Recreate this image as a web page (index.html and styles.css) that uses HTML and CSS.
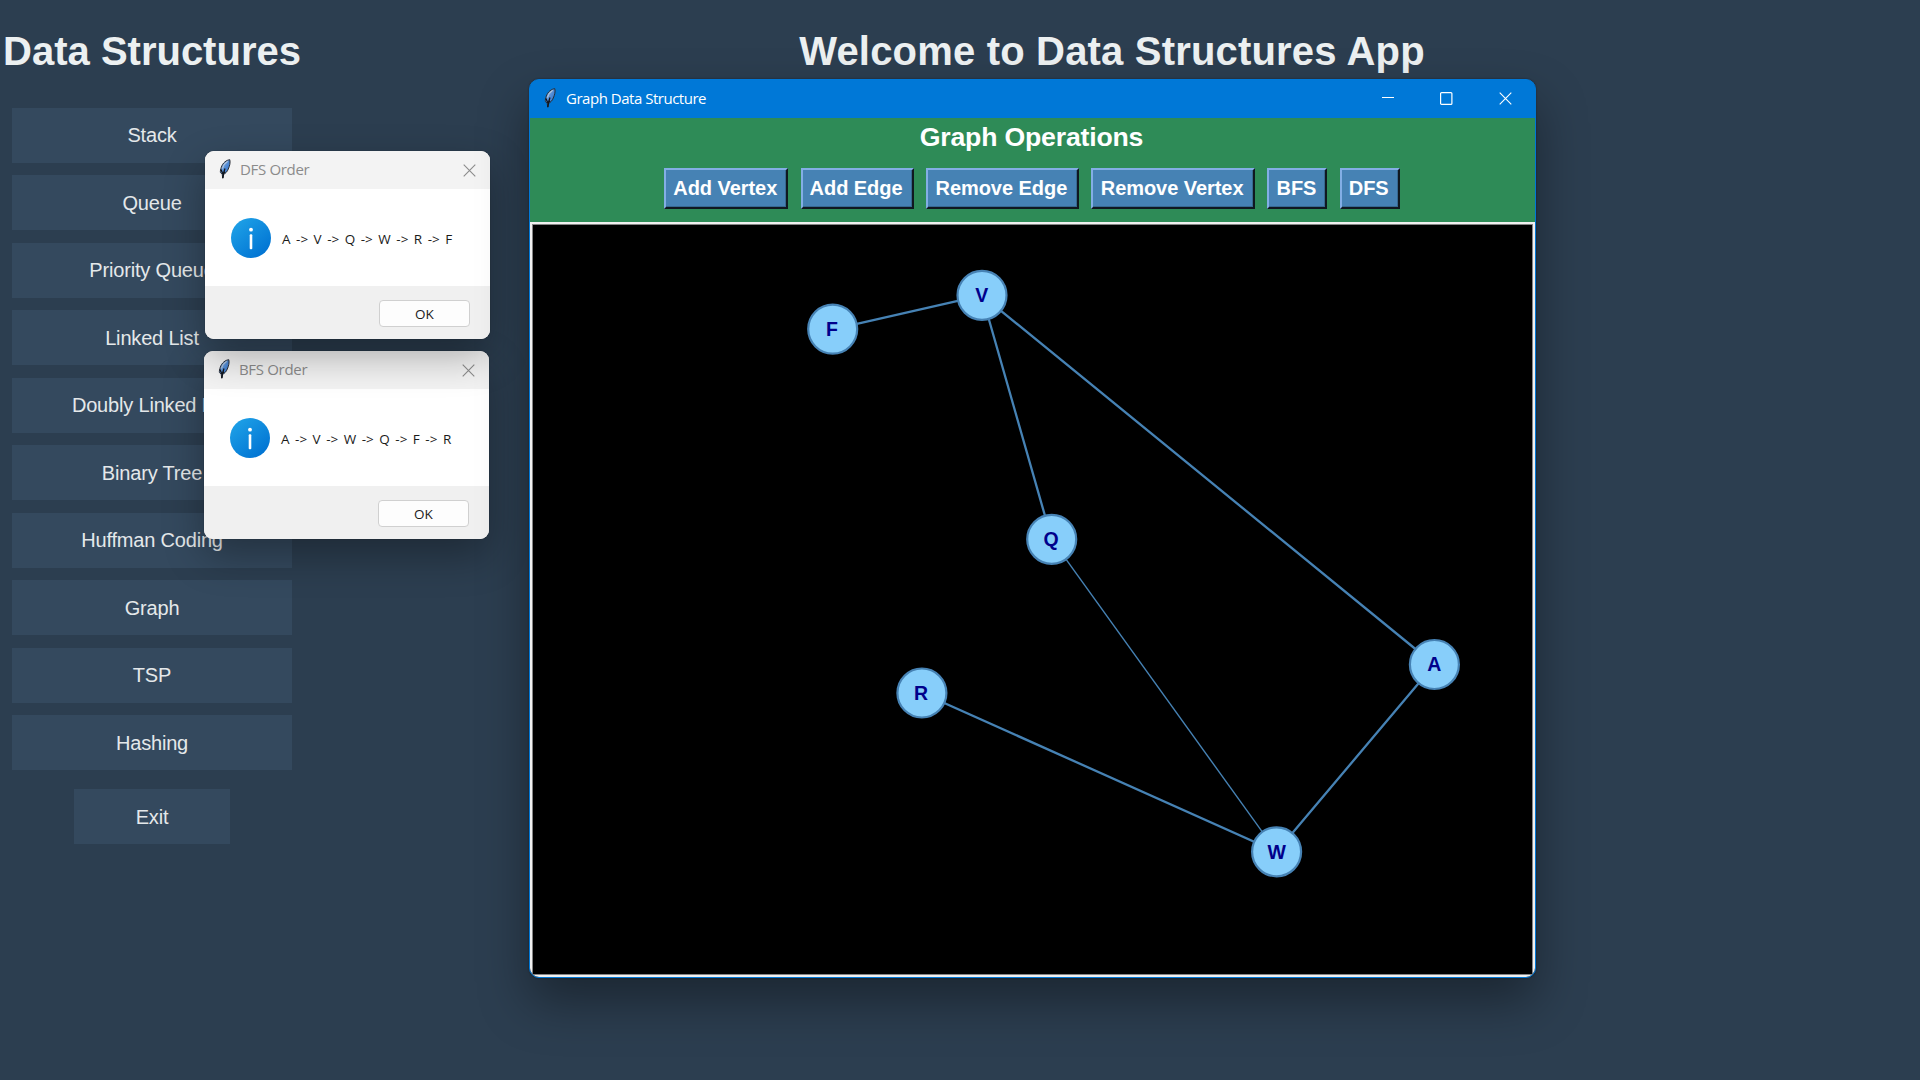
FILE: index.html
```html
<!DOCTYPE html>
<html lang="en">
<head>
<meta charset="utf-8">
<title>Data Structures App</title>
<link rel="stylesheet" href="styles.css">
</head>
<body>
<svg class="defs" aria-hidden="true">
  <defs>
    <linearGradient id="info-fill" x1="0.15" y1="0.1" x2="0.85" y2="0.95">
      <stop offset="0" stop-color="#1d9fe6"/><stop offset="1" stop-color="#0072d2"/>
    </linearGradient>
    <linearGradient id="quill-fill" x1="0" y1="0" x2="1" y2="1">
      <stop offset="0" stop-color="#8db8e8"/><stop offset="0.55" stop-color="#4a86d4"/><stop offset="1" stop-color="#2a5596"/>
    </linearGradient>
    <symbol id="quill" viewBox="0 0 12 20">
      <path d="M10.800.7C7.600.9 3.600 4 2.300 8.200c-.6 2-1.200 3.900-.8 5.400l1.700 1.700.6 4 .9-4c2-1 3.600-2.800 4.600-5.300C10.700 7 11.500 3.600 10.800.7z" fill="url(#quill-fill)" stroke="#2a2e36" stroke-width="1"/>
      <path d="M6 9.500C5 12 4.200 14.500 3.800 19M1.900 10.500l1.800 4 2.500-1.500" fill="none" stroke="#11151c" stroke-width="1.300"/>
      <path d="M8.700 2.300C6.500 3.700 4.400 6.300 3.400 9.500" fill="none" stroke="#b7c6d8" stroke-width="1.100"/>
    </symbol>
    <symbol id="close" viewBox="0 0 13 13">
      <path d="M.7.7l11.600 11.600M12.300.7L.7 12.300" fill="none" stroke="currentColor" stroke-width="1.100"/>
    </symbol>
    <symbol id="info" viewBox="0 0 40 40">
      <circle cx="20" cy="20" r="20" fill="url(#info-fill)"/>
      <circle cx="20" cy="11.700" r="1.900" fill="#fff"/>
      <rect x="18.700" y="16.300" width="2.600" height="15" rx="1" fill="#fff"/>
    </symbol>
  </defs>
</svg>

<div class="app">
  <nav class="sidebar">
    <h1 class="heading">Data Structures</h1>
    <div class="menu">
      <button class="menu-button">Stack</button>
      <button class="menu-button">Queue</button>
      <button class="menu-button">Priority Queue</button>
      <button class="menu-button">Linked List</button>
      <button class="menu-button">Doubly Linked List</button>
      <button class="menu-button">Binary Tree</button>
      <button class="menu-button">Huffman Coding</button>
      <button class="menu-button">Graph</button>
      <button class="menu-button">TSP</button>
      <button class="menu-button">Hashing</button>
    </div>
    <button class="menu-button exit">Exit</button>
  </nav>
  <main class="content"><h1 class="heading welcome">Welcome to Data Structures App</h1></main>
</div>

<section class="dialog dialog-bfs">
  <header class="dialog-title"><svg class="quill"><use href="#quill"/></svg><span class="dialog-name">BFS Order</span><svg class="close"><use href="#close"/></svg></header>
  <div class="dialog-body"><svg class="info"><use href="#info"/></svg><p class="message">A -&gt; V -&gt; W -&gt; Q -&gt; F -&gt; R</p></div>
  <footer class="dialog-footer"><button class="ok">OK</button></footer>
</section>

<section class="dialog dialog-dfs">
  <header class="dialog-title"><svg class="quill"><use href="#quill"/></svg><span class="dialog-name">DFS Order</span><svg class="close"><use href="#close"/></svg></header>
  <div class="dialog-body"><svg class="info"><use href="#info"/></svg><p class="message">A -&gt; V -&gt; Q -&gt; W -&gt; R -&gt; F</p></div>
  <footer class="dialog-footer"><button class="ok">OK</button></footer>
</section>

<section class="window">
  <header class="window-title">
    <svg class="quill"><use href="#quill"/></svg>
    <span class="window-name">Graph Data Structure</span>
    <div class="controls">
      <svg class="control" viewBox="0 0 13 13"><path d="M1 5.500h12" stroke="#fff" stroke-width="1.100"/></svg>
      <svg class="control" viewBox="0 0 13 13"><rect x=".6" y=".6" width="11.300" height="11.800" rx="1" fill="none" stroke="#fff" stroke-width="1.200"/></svg>
      <svg class="control"><use href="#close"/></svg>
    </div>
  </header>
  <div class="operations">
    <h2 class="operations-title">Graph Operations</h2>
    <div class="toolbar">
      <button class="tool add-vertex">Add Vertex</button>
      <button class="tool add-edge">Add Edge</button>
      <button class="tool remove-edge">Remove Edge</button>
      <button class="tool remove-vertex">Remove Vertex</button>
      <button class="tool short">BFS</button>
      <button class="tool short">DFS</button>
    </div>
  </div>
  <svg class="canvas" viewBox="532 224.700 1001 751">
    <g class="edges">
      <path d="M832.700 330L982 296M982 296L1051.700 540M982 296L1434.400 665.200M921.900 693.700L1276.600 852.500M1434.400 665.200L1276.600 852.500"/>
      <path class="thin" d="M1051.700 540L1276.600 852.500"/>
    </g>
    <g class="nodes">
      <circle cx="832.700" cy="329.800" r="24.500"/><circle cx="982" cy="296" r="24.500"/><circle cx="1051.700" cy="540" r="24.500"/>
      <circle cx="921.900" cy="693.700" r="24.500"/><circle cx="1434.400" cy="665.200" r="24.500"/><circle cx="1276.600" cy="852.500" r="24.500"/>
    </g>
    <g class="labels">
      <text x="832" y="337">F</text><text x="981.700" y="303">V</text><text x="1051.200" y="547">Q</text>
      <text x="921" y="700.700">R</text><text x="1434.200" y="672.200">A</text><text x="1276.800" y="859.500">W</text>
    </g>
  </svg>
</section>
</body>
</html>
```
FILE: styles.css
```css
* { box-sizing: border-box; }

body {
  margin: 0;
  height: 1080px;
  overflow: hidden;
  position: relative;
  background: #2c3e50;
  font-family: "Liberation Sans", Arial, sans-serif;
}

h1, h2, p { margin: 0; }

button {
  margin: 0;
  padding: 0;
  border: 0;
  font: inherit;
  color: inherit;
}

.defs { position: absolute; width: 0; height: 0; }

/* Main application */
.app { display: flex; height: 100%; }

.sidebar {
  width: 304px;
  display: flex;
  flex-direction: column;
  align-items: center;
}

.heading {
  padding-top: 28px;
  height: 107.500px;
  font-size: 40px;
  line-height: 46px;
  font-weight: bold;
  color: #ecf0f1;
  white-space: nowrap;
}

.welcome { letter-spacing: 0.180px; }

.menu { display: flex; flex-direction: column; gap: 12.500px; }

.menu-button {
  width: 280px;
  height: 55px;
  padding-top: 1px;
  background: #34495e;
  color: #e4e8ea;
  font-size: 20px;
  letter-spacing: -0.180px;
}

.exit { width: 156px; margin-top: 19px; }

.content { flex: 1; text-align: center; }

/* Message boxes */
.dialog {
  position: absolute;
  width: 285px;
  height: 188px;
  display: flex;
  flex-direction: column;
  border-radius: 9px;
  overflow: hidden;
  background: #fff;
  box-shadow: 0 0 1px rgba(0, 0, 0, .5), 0 16px 40px rgba(0, 0, 0, .32);
  font-family: "Open Sans", "Noto Sans", sans-serif;
}

.dialog-dfs { left: 205px; top: 151px; }
.dialog-bfs { left: 204px; top: 351px; }

.dialog-title {
  height: 38px;
  display: flex;
  align-items: center;
  padding: 0 14px 0 14px;
  background: #f3f3f3;
  color: #8b8b8b;
}

.quill { width: 12px; height: 20px; flex: none; margin-top: -2px; }

.dialog-name {
  flex: 1;
  margin: -2px 0 0 9px;
  font-size: 15px;
  letter-spacing: -0.320px;
}

.close { width: 13px; height: 13px; }

.dialog-body {
  height: 97px;
  display: flex;
  align-items: center;
  padding-left: 26px;
}

.info { width: 40px; height: 40px; flex: none; }

.message {
  margin: 3px 0 0 11px;
  font-size: 13.500px;
  word-spacing: 2px;
  color: #1a1a1a;
  white-space: nowrap;
}

.dialog-footer {
  flex: 1;
  display: flex;
  justify-content: flex-end;
  padding: 14px 20px 0 0;
  background: #f0f0f0;
}

.ok {
  width: 91px;
  height: 27px;
  border: 1px solid #d0d0d0;
  border-radius: 4px;
  background: #fdfdfd;
  font-size: 13.500px;
  color: #1a1a1a;
}

/* Graph window */
.window {
  position: absolute;
  left: 529px;
  top: 79px;
  width: 1007px;
  height: 899px;
  display: flex;
  flex-direction: column;
  border: 1px solid #0078d7;
  border-radius: 10px;
  overflow: hidden;
  background: #0078d7;
  box-shadow: 0 0 2px rgba(0, 0, 0, .4), 0 24px 50px rgba(0, 0, 0, .38);
}

.window-title {
  height: 38px;
  display: flex;
  align-items: center;
  padding: 0 23px 0 14px;
  color: #fff;
  font-family: "Open Sans", "Noto Sans", sans-serif;
}

.window-name {
  flex: 1;
  margin: -2px 0 0 10px;
  font-size: 15px;
  letter-spacing: -0.480px;
}

.controls { display: flex; gap: 46px; margin-top: -1px; }
.control { width: 13px; height: 13px; color: #fff; }

.operations {
  height: 104px;
  display: flex;
  flex-direction: column;
  align-items: center;
  background: #2e8b57;
  color: #fff;
}

.operations-title {
  height: 50px;
  padding: 4px 2px 0 0;
  font-size: 26.670px;
  line-height: 30px;
  letter-spacing: -0.200px;
}

.toolbar { display: flex; gap: 12.300px; margin-right: 1px; }

.tool {
  height: 41px;
  padding-right: 2px;
  background: #4682b4;
  border: 2px solid;
  border-color: #83aee5 #101820 #101820 #83aee5;
  box-shadow: inset -1px -1px #376890;
  font-size: 20px;
  font-weight: bold;
  letter-spacing: -0.050px;
}

.add-vertex { width: 124px; }
.add-edge { width: 113px; }
.remove-edge { width: 153px; }
.remove-vertex { width: 164px; }
.short { width: 60px; }

.canvas {
  flex: 1;
  min-height: 0;
  width: 100%;
  border: 2px solid #f0f0f0;
  background: #000;
  box-shadow: inset 0 0 0 1px #858585;
}

.edges { fill: none; stroke: #4682b4; stroke-width: 2.300px; }
.thin { stroke-width: 1.400px; }
.nodes { fill: #87cefa; stroke: #4682b4; stroke-width: 2.200px; }
.labels {
  fill: #00008b;
  font-size: 19.500px;
  font-weight: bold;
  text-anchor: middle;
}
```
